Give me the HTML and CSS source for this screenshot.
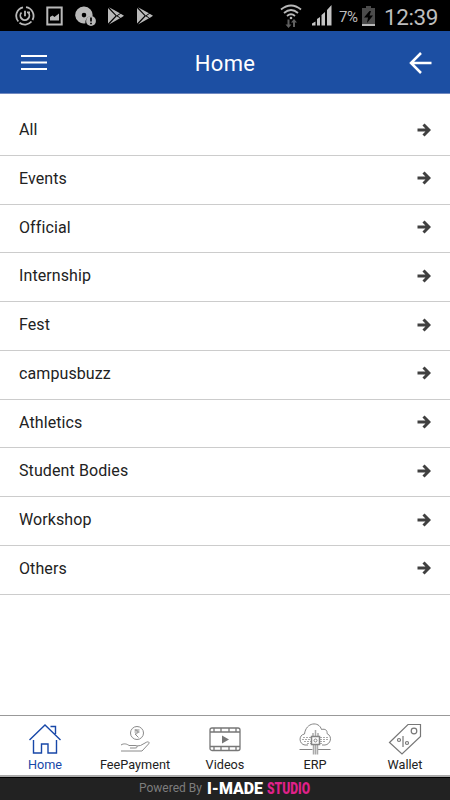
FILE: index.html
```
<!DOCTYPE html>
<html lang="en">
<head>
	<title>Home</title>
	<meta charset="UTF-8">
	<link rel="stylesheet" href="styles.css">
</head>
<body>
	<svg width="0" height="0" class="defs">
		<symbol id="play" viewBox="0 0 18 20">
			<path d="M1 2v15.500L8.500 9.800zM2 1.300L13 7.300 9.700 9.400zM2 18.400L13 12.300 9.700 10.300zM13.700 7.700l3.300 2.100-3.300 2.100-3-2.100z" fill="#b9b9b9"/>
		</symbol>
		<symbol id="arrow" viewBox="0 0 14 14">
			<path d="M0.500 7h11M6.500 1.500L12 7l-5.500 5.500" fill="none" stroke="#404040" stroke-width="3"/>
		</symbol>
	</svg>
	<div id="status">
		<svg class="icon" width="20" height="20" viewBox="0 0 20 20" fill="none" stroke="#b9b9b9" stroke-width="1.800">
			<path d="M8 1.300A8.800 8.800 0 0 0 3.300 15.500M4.500 16.800A8.800 8.800 0 0 0 16.500 15.500M17.500 14A8.800 8.800 0 0 0 11 1.200"/>
			<path d="M6.500 6.500A4.500 4.500 0 1 0 13.200 6.500M10 4.800v5.500M12 6.300h3"/>
		</svg>
		<svg class="icon" width="18" height="20" viewBox="0 0 18 20">
			<path d="M1.300 1.500h14.400v17H1.300z" fill="none" stroke="#b9b9b9" stroke-width="2"/>
			<path d="M4 14.500V11l2.500-1.500 2 1.500L13 7.500v7z" fill="#b9b9b9"/>
		</svg>
		<svg class="icon" width="22" height="20" viewBox="0 0 22 20">
			<path d="M9 .5a8.500 8.500 0 1 0 1.500 16.800 6 6 0 0 1 7-7A8.500 8.500 0 0 0 9 .5zM9 6.800a2.300 2.300 0 1 1 0 4.600a2.300 2.300 0 0 1 0-4.600z" fill="#b9b9b9" fill-rule="evenodd"/>
			<circle cx="16" cy="15" r="4.900" fill="#b9b9b9"/>
			<path d="M16 11.500v4M16 16.700v1.600" stroke="#000" stroke-width="1.700"/>
		</svg>
		<svg class="icon" width="18" height="20"><use href="#play"/></svg>
		<svg class="icon" width="18" height="20"><use href="#play"/></svg>
		<div id="signal">
			<svg width="22" height="24" viewBox="0 0 22 24" fill="none" stroke="#b9b9b9" stroke-width="1.800">
				<path d="M1 5.500Q11-2.500 21 5.500M4 9Q11 3 18 9M7 12Q11 8.500 15 12"/>
				<circle cx="11" cy="14" r="1.300" fill="#b9b9b9" stroke="none"/>
				<path d="M7.500 15.500v5H5.500l3 3.500 3-3.500h-2v-5zM13 23v-4.500h-2l3-3.500 3 3.500h-2V23z" fill="#606060" stroke="none"/>
			</svg>
			<svg width="20" height="21" viewBox="0 0 20 21" fill="#c4c4c4">
				<path d="M0 20.500v-2l3.500-2v4zM5 20.500v-6.500l3-2v8.500zM9.500 20.500V10l3.500-3v13.500zM15 20.500V5l4.500-5v20.500z"/>
			</svg>
			<span class="percent">7%</span>
			<svg width="13" height="20" viewBox="0 0 13 20">
				<path d="M4 0h5v2h4v18H0V2h4z" fill="#4b4b4b"/>
				<path d="M0 18h13v2H0z" fill="#b9b9b9"/>
				<path d="M7.500 5L2 11.500h4L5 17l6-7.500H7.500L9 5z" fill="#000"/>
			</svg>
			<span class="clock">12:39</span>
		</div>
	</div>
	<div id="header">
		<svg width="26" height="18" viewBox="0 0 26 18"><path d="M0 2h26M0 8.500h26M0 15h26" stroke="#fff" stroke-width="2.200"/></svg>
		<h1>Home</h1>
		<svg width="23" height="24" viewBox="0 0 23 24"><path d="M22.500 12H2M12 2L2 12l10 10" fill="none" stroke="#fff" stroke-width="2.500"/></svg>
	</div>
	<ul id="list">
		<li>All<svg width="14" height="14"><use href="#arrow"/></svg></li>
		<li>Events<svg width="14" height="14"><use href="#arrow"/></svg></li>
		<li>Official<svg width="14" height="14"><use href="#arrow"/></svg></li>
		<li>Internship<svg width="14" height="14"><use href="#arrow"/></svg></li>
		<li>Fest<svg width="14" height="14"><use href="#arrow"/></svg></li>
		<li>campusbuzz<svg width="14" height="14"><use href="#arrow"/></svg></li>
		<li>Athletics<svg width="14" height="14"><use href="#arrow"/></svg></li>
		<li>Student Bodies<svg width="14" height="14"><use href="#arrow"/></svg></li>
		<li>Workshop<svg width="14" height="14"><use href="#arrow"/></svg></li>
		<li>Others<svg width="14" height="14"><use href="#arrow"/></svg></li>
	</ul>
	<ul id="tabs">
		<li class="selected">
			<svg width="34" height="32" viewBox="0 0 34 32" fill="none" stroke="#1747a8" stroke-width="1.400">
				<path d="M1.500 17L17 2l15.500 15M22.500 3.500h5v7.500M5.500 17v13h8v-9h6.500v9h8.500V17"/>
			</svg>
			<span>Home</span>
		</li>
		<li>
			<svg width="34" height="32" viewBox="0 0 34 32" fill="none" stroke="#8a8a8a">
				<circle cx="19" cy="10" r="6.500"/>
				<path d="M16.500 7h5M16.500 9h5M17 7c4 0 4 4 0 4l3.500 3.500"/>
				<path d="M3 22c3-2 6-1 8 .5h6c3 0 3 2.500 0 2.500h-5M18.500 23l4-.5 6-3.300c2-1 3.500.3 2 1.800L24 28H3"/>
			</svg>
			<span>FeePayment</span>
		</li>
		<li>
			<svg width="34" height="32" viewBox="0 0 34 32" fill="none" stroke="#777" stroke-width="1.300">
				<rect x="2" y="5" width="30" height="22.500" rx="2"/>
				<path d="M2 9h30M2 23.500h30M6 5v4M13 5v4M21 5v4M28 5v4M6 23.500v4M13 23.500v4M21 23.500v4M28 23.500v4"/>
				<path d="M14 12.500l7 4-7 4z" fill="#777" stroke="none"/>
			</svg>
			<span>Videos</span>
		</li>
		<li>
			<svg width="34" height="32" viewBox="0 0 34 32" fill="none" stroke="#858585">
				<path d="M10 22H7c-6-.5-7-10-.5-11C8-1 21-2 23.500 6.500c4-1 6 1 5.500 4 6 3 3.500 11-2 11.500h-3"/>
				<path d="M1.500 26.500h13M20 26.500h12.500"/>
				<path d="M15 10v3.500M17.500 7v6.500M20 10v3.500M15.500 22v9.500M17.500 22v9.500M19.500 22v9.500" stroke="#aaa" stroke-width="1.500"/>
				<path d="M5 14.500h8M4 16.500h9M6 18.500h7M9 20.500h4M22 14.500h8M22 16.500h8M22 18.500h6M22 20.500h3" stroke="#aaa" stroke-dasharray="2 1"/>
				<rect x="13.500" y="13.500" width="8" height="8" fill="#fff" stroke-width="1.500"/>
				<circle cx="17.500" cy="17.500" r="1.500"/>
			</svg>
			<span>ERP</span>
		</li>
		<li>
			<svg width="34" height="32" viewBox="0 0 34 32" fill="none" stroke="#777" stroke-width="1.200">
				<path d="M1.500 19.500L20 1.500h12.500v12L14 31z"/>
				<circle cx="26" cy="8" r="2.800"/>
				<circle cx="11" cy="17" r="1.500"/>
				<circle cx="19" cy="20" r="1.500"/>
				<path d="M15 13v11"/>
			</svg>
			<span>Wallet</span>
		</li>
	</ul>
	<div id="powered">
		<span>Powered By</span>
		<svg width="160" height="22" viewBox="0 0 160 22">
			<text x="1" y="16.500" class="brand" textLength="56" lengthAdjust="spacingAndGlyphs">I-MADE</text>
			<text x="61" y="16.500" class="brand pink" textLength="43" lengthAdjust="spacingAndGlyphs">STUDIO</text>
		</svg>
	</div>
</body>
</html>
```
FILE: styles.css
```
*{
	margin: 0;
	padding: 0;
	box-sizing: border-box;
}
body{
	height: 800px;
	display: flex;
	flex-direction: column;
	background: #fff;
	font-family: Roboto, "Liberation Sans", sans-serif;
	overflow: hidden;
}
.defs{
	position: absolute;
}
ul{
	list-style: none;
}
svg{
	flex-shrink: 0;
}
#status{
	height: 31px;
	background: #000;
	display: flex;
	align-items: center;
	padding-left: 15px;
	gap: 11px;
}
#status .icon:nth-child(4){
	margin-left: -1px;
}
#signal{
	flex: 1;
	display: flex;
	align-items: center;
	justify-content: flex-end;
	padding-right: 12px;
	color: #bdbdbd;
}
#signal svg:nth-child(2){
	margin: 0 7px 0 10px;
}
.percent{
	font-size: 15px;
	width: 19px;
	margin-right: 4px;
	padding-top: 2px;
	letter-spacing: -0.5px;
}
.clock{
	font-size: 22.500px;
	line-height: 28px;
	margin-left: 9px;
	width: 54px;
	padding-top: 3px;
	letter-spacing: -0.4px;
}
#header{
	height: 63px;
	background: #1c4fa3;
	border-bottom: 1px solid #7189c0;
	display: flex;
	align-items: center;
	justify-content: space-between;
	padding: 2px 18px 0 21px;
	color: #fff;
}
#header h1{
	font-size: 22px;
	font-weight: 400;
	letter-spacing: 0.3px;
	margin-right: 6px;
}
#list{
	padding-top: 13px;
	flex: 1;
}
#list li{
	height: 48.780px;
	border-bottom: 1px solid #ccc;
	display: flex;
	align-items: center;
	justify-content: space-between;
	padding: 0 19px;
	padding-bottom: 2.600px;
	font-size: 16px;
	letter-spacing: 0.1px;
	color: #222;
}
#tabs{
	height: 62px;
	border-top: 1px solid #999;
	border-bottom: 2px solid #aaa;
	display: flex;
}
#tabs li{
	width: 90px;
	display: flex;
	flex-direction: column;
	align-items: center;
	padding-top: 7px;
	font-size: 12.700px;
	line-height: 19px;
	color: #222;
}
#tabs .selected{
	color: #1747a8;
}
#powered{
	height: 23px;
	background: #222;
	border-top: 1px solid #000;
	display: flex;
	align-items: center;
	padding-left: 139px;
	gap: 2px;
	font-size: 12px;
	line-height: 14px;
	padding-bottom: 3px;
	color: #7d7d7d;
}
#powered span{
	width: 65px;
	white-space: nowrap;
}
.brand{
	font-size: 17px;
	font-weight: 900;
	fill: #fff;
}
.pink{
	fill: #e0218a;
}
```
